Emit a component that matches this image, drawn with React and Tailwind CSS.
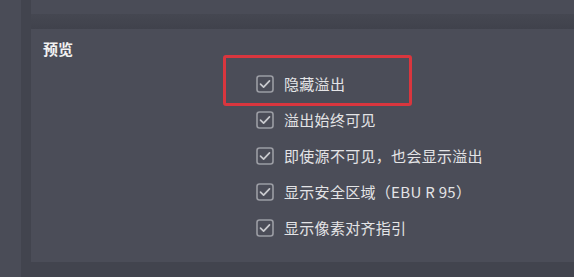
const items = [
    "隐藏溢出",
    "溢出始终可见",
    "即使源不可见，也会显示溢出",
    "显示安全区域（EBU R 95）",
    "显示像素对齐指引",
];

const CheckBox = () => (
    <svg width="18" height="18" viewBox="0 0 18 18" className="shrink-0">
        <rect x="1" y="1" width="16" height="16" rx="2.5" fill="none" stroke="#9b9da4" strokeWidth="1.6" />
        <polyline points="4.5,9.2 7.6,12.2 13.5,5.8" fill="none" stroke="#c9cace" strokeWidth="1.7" strokeLinecap="round" strokeLinejoin="round" />
    </svg>
);

const App = () => {
    return (
        <div
            className="flex w-[574px] h-[277px] overflow-hidden bg-[#4a4c57]"
            style={{ fontFamily: '"Noto Sans CJK SC", "Noto Sans", sans-serif' }}
        >
            <div className="w-[21px] h-full bg-[#4a4c57]" />
            <div className="flex-1 flex flex-col pl-[10px] bg-[#42444e]">
                <div className="h-[14px] bg-[#4a4c57]" />
                <div className="h-[15px] bg-gradient-to-b from-[#454751] to-[#40424c]" />
                <div className="relative h-[233px] bg-[#4b4d58] pt-[11px] pl-[12px]">
                    <h2 className="text-[15px] leading-[18px] font-bold text-[#f2f2f2]">预览</h2>
                    <ul className="mt-[8px] pl-[213px] flex flex-col">
                        {items.map((t) => (
                            <li key={t} className="h-[36px] flex items-center gap-[10px]">
                                <CheckBox />
                                <span className="text-[15px] text-[#e4e4e6] tracking-[0.3px]">{t}</span>
                            </li>
                        ))}
                    </ul>
                    <div className="absolute left-[192px] top-[26px] w-[189px] h-[51px] border-[3px] border-[#d9363e] rounded-[3px]" />
                </div>
                <div className="flex-1 bg-[#42444e]" />
            </div>
        </div>
    );
};

export default App;
